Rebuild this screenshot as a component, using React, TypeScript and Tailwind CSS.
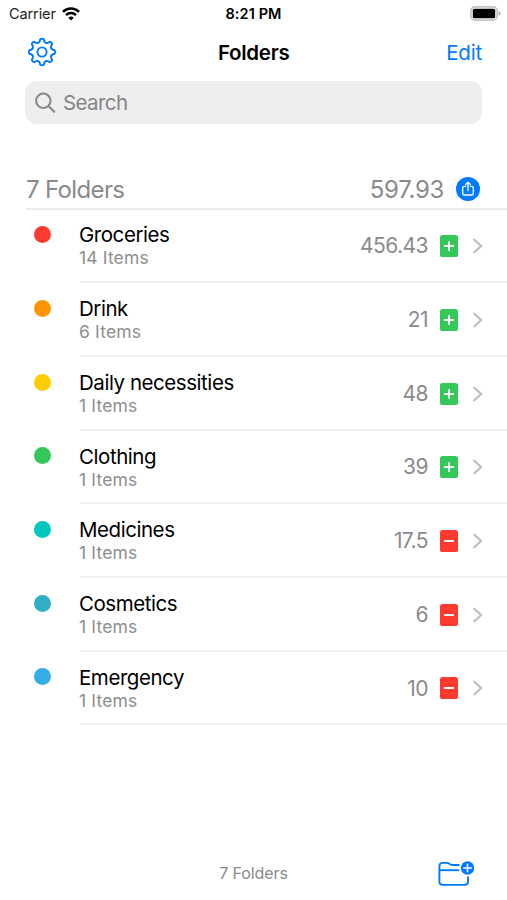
type Folder = {
    name: string;
    items: number;
    total: string;
    dot: string;
    kind: "plus" | "minus";
};

const folders: Folder[] = [
    { name: "Groceries", items: 14, total: "456.43", dot: "bg-[#ff3b30]", kind: "plus" },
    { name: "Drink", items: 6, total: "21", dot: "bg-[#ff9500]", kind: "plus" },
    { name: "Daily necessities", items: 1, total: "48", dot: "bg-[#ffcc00]", kind: "plus" },
    { name: "Clothing", items: 1, total: "39", dot: "bg-[#34c759]", kind: "plus" },
    { name: "Medicines", items: 1, total: "17.5", dot: "bg-[#00c7be]", kind: "minus" },
    { name: "Cosmetics", items: 1, total: "6", dot: "bg-[#30b0c7]", kind: "minus" },
    { name: "Emergency", items: 1, total: "10", dot: "bg-[#32ade6]", kind: "minus" },
];

// Outline of an eight-toothed gear centred on 0,0
function gearPath() {
    const at = (deg: number, r: number) => {
        const rad = (deg * Math.PI) / 180;
        return (r * Math.cos(rad)).toFixed(2) + " " + (r * Math.sin(rad)).toFixed(2);
    };
    let d = "";
    for (let i = 0; i < 8; i++) {
        const a = i * 45;
        d += (i === 0 ? "M" : "L") + at(a - 8, 12.8);
        d += "Q" + at(a, 13.8) + " " + at(a + 8, 12.8);
        d += "L" + at(a + 12, 11);
        d += "Q" + at(a + 22.5, 9) + " " + at(a + 33, 11);
    }
    return d + "Z";
}

function GearIcon() {
    return (
        <svg width="30" height="30" viewBox="-15 -15 30 30" fill="none" stroke="#007aff" strokeWidth="1.9" strokeLinejoin="round">
            <path d={gearPath()} />
            <circle r="4.6" />
        </svg>
    );
}

function WifiIcon() {
    return (
        <svg width="18" height="14" viewBox="0 0 18 14" fill="none" stroke="#000" strokeWidth="2.5">
            <path d="M1 4.9a11.4 11.4 0 0 1 16 0" />
            <path d="M4 8.1a7.2 7.2 0 0 1 10 0" />
            <path d="M9 13.6 6.3 10.8a3.9 3.9 0 0 1 5.4 0Z" fill="#000" stroke="none" />
        </svg>
    );
}

function BatteryIcon() {
    return (
        <svg width="31" height="15" viewBox="0 0 31 15">
            <rect x="0.9" y="0.9" width="26.2" height="13.2" rx="4" fill="#fff" stroke="#c4c4c4" strokeWidth="1.7" />
            <rect x="2.8" y="2.8" width="22.4" height="9.4" rx="1.5" fill="#000" />
            <path d="M28.6 5.2c1.2.4 1.9 1.3 1.9 2.3s-.7 1.9-1.9 2.3Z" fill="#a6a6a6" />
        </svg>
    );
}

function SearchIcon() {
    return (
        <svg width="22" height="22" viewBox="0 0 22 22" fill="none" stroke="#85858a" strokeWidth="2" strokeLinecap="round">
            <circle cx="8.3" cy="8.8" r="7.2" />
            <path d="m13.7 14.2 5.6 5.5" />
        </svg>
    );
}

function ShareIcon() {
    return (
        <svg width="24" height="24" viewBox="0 0 24 24" fill="none" stroke="#fff" strokeWidth="1.3" strokeLinecap="round" strokeLinejoin="round">
            <circle cx="12" cy="12" r="12" fill="#007aff" stroke="none" />
            <path d="M9.7 9.4H8.3a1.6 1.6 0 0 0-1.6 1.6v5.4A1.6 1.6 0 0 0 8.3 18h7.4a1.6 1.6 0 0 0 1.6-1.6V11a1.6 1.6 0 0 0-1.6-1.6h-1.4" />
            <path d="M12 13.7V5.4M9.7 7.5 12 5.3l2.3 2.2" />
        </svg>
    );
}

function KindIcon({ kind }: { kind: "plus" | "minus" }) {
    return (
        <svg width="18" height="22" viewBox="0 0 18 22" stroke="#fff" strokeWidth="1.8" strokeLinecap="round">
            <rect width="18" height="22" rx="2.6" stroke="none" fill={kind === "plus" ? "#34c759" : "#ff3b30"} />
            <path d="M4.8 11h8.4" />
            {kind === "plus" && <path d="M9 6.8v8.4" />}
        </svg>
    );
}

function ChevronIcon() {
    return (
        <svg width="10" height="16" viewBox="0 0 10 16" fill="none" stroke="#bebec1" strokeWidth="2.2" strokeLinecap="round" strokeLinejoin="round">
            <path d="M1.3 1.7 8.2 8l-6.9 6.3" />
        </svg>
    );
}

function NewFolderIcon() {
    return (
        <svg width="37" height="27" viewBox="0 0 37 27" fill="none" stroke="#007aff" strokeWidth="1.9" strokeLinejoin="round">
            <path d="M21.5 5h-7.4c-1.2 0-1.8-.4-2.6-1.1-.8-.7-1.4-1-2.6-1H4.6c-2 0-3.2 1.1-3.2 3.1v15.8c0 2 1.1 3.1 3.2 3.1h22.2c2 0 3.2-1.1 3.2-3.1v-5.4" />
            <path d="M1.4 10.2h19.8" />
            <circle cx="29.5" cy="8" r="6.7" fill="#007aff" stroke="none" />
            <path d="M25.7 8h7.6M29.5 4.2v7.6" stroke="#fff" strokeWidth="1.6" strokeLinecap="round" />
        </svg>
    );
}

function FolderRow({ folder }: { folder: Folder }) {
    return (
        <li className="flex h-[73.7px] pl-[34px]">
            <span className={"mt-[16.8px] size-[17px] shrink-0 rounded-full " + folder.dot}></span>
            <div className="ml-[29px] flex grow items-center border-b-2 border-[#efeff0] pr-[24px] pt-[1.6px]">
                <div className="-ml-px grow pb-[1.4px]">
                    <h2 className="text-[20.5px] leading-[26px] tracking-[-0.45px] text-black">{folder.name}</h2>
                    <p className="-mt-px text-[17.5px] leading-[21px] tracking-[0.15px] text-[#8e8e90]">{folder.items} Items</p>
                </div>
                <span className="mr-3 text-[21px] tracking-[-0.55px] text-[#8a8a8d]">{folder.total}</span>
                <KindIcon kind={folder.kind} />
                <span className="ml-[15px]">
                    <ChevronIcon />
                </span>
            </div>
        </li>
    );
}

export default function App() {
    return (
        <div className="flex h-[900px] w-[507px] flex-col bg-white font-['Inter','Liberation_Sans',sans-serif]">
            <header>
                <div className="grid h-[27px] grid-cols-3 items-center pl-[9px] pr-[6px]">
                    <div className="flex items-center gap-[6px]">
                        <span className="text-[14.5px] tracking-[-0.1px] text-[#222]">Carrier</span>
                        <WifiIcon />
                    </div>
                    <span className="pr-[3px] text-center text-[14.5px] font-semibold tracking-[0.1px] text-black">8:21 PM</span>
                    <div className="flex justify-end">
                        <BatteryIcon />
                    </div>
                </div>
                <div className="grid h-[50px] grid-cols-3 items-center pl-[26.5px] pr-[25px]">
                    <button className="w-fit">
                        <GearIcon />
                    </button>
                    <h1 className="pr-px pt-[2px] text-center text-[20.5px] font-semibold tracking-[-0.3px] text-black">Folders</h1>
                    <button className="pt-[2px] text-right text-[20.5px] tracking-[-0.2px] text-[#007aff]">Edit</button>
                </div>
            </header>
            <div className="mx-[25px] mt-1 flex h-[43px] items-center gap-[6px] rounded-[12px] bg-[#eeeeef] pl-[10px]">
                <SearchIcon />
                <span className="pt-px text-[20.5px] tracking-[-0.6px] text-[#858589]">Search</span>
            </div>
            <div className="ml-[26px] mt-[44px] flex h-[42px] shrink-0 items-center border-b-2 border-[#ebebec] pr-[27px] pt-px text-[24px] tracking-[-0.65px] text-[#8a8a8d]">
                <span className="grow pt-[2px]">7 Folders</span>
                <span className="mr-3 pt-[2px] tracking-[-0.3px]">597.93</span>
                <ShareIcon />
            </div>
            <ul className="-mt-[0.5px] grow">
                {folders.map((folder) => (
                    <FolderRow key={folder.name} folder={folder} />
                ))}
            </ul>
            <footer className="grid h-[54px] grid-cols-3 items-center px-[32px]">
                <span></span>
                <span className="text-center text-[16px] tracking-[-0.1px] text-[#8a8a8d]">7 Folders</span>
                <button className="flex justify-end">
                    <NewFolderIcon />
                </button>
            </footer>
        </div>
    );
}
